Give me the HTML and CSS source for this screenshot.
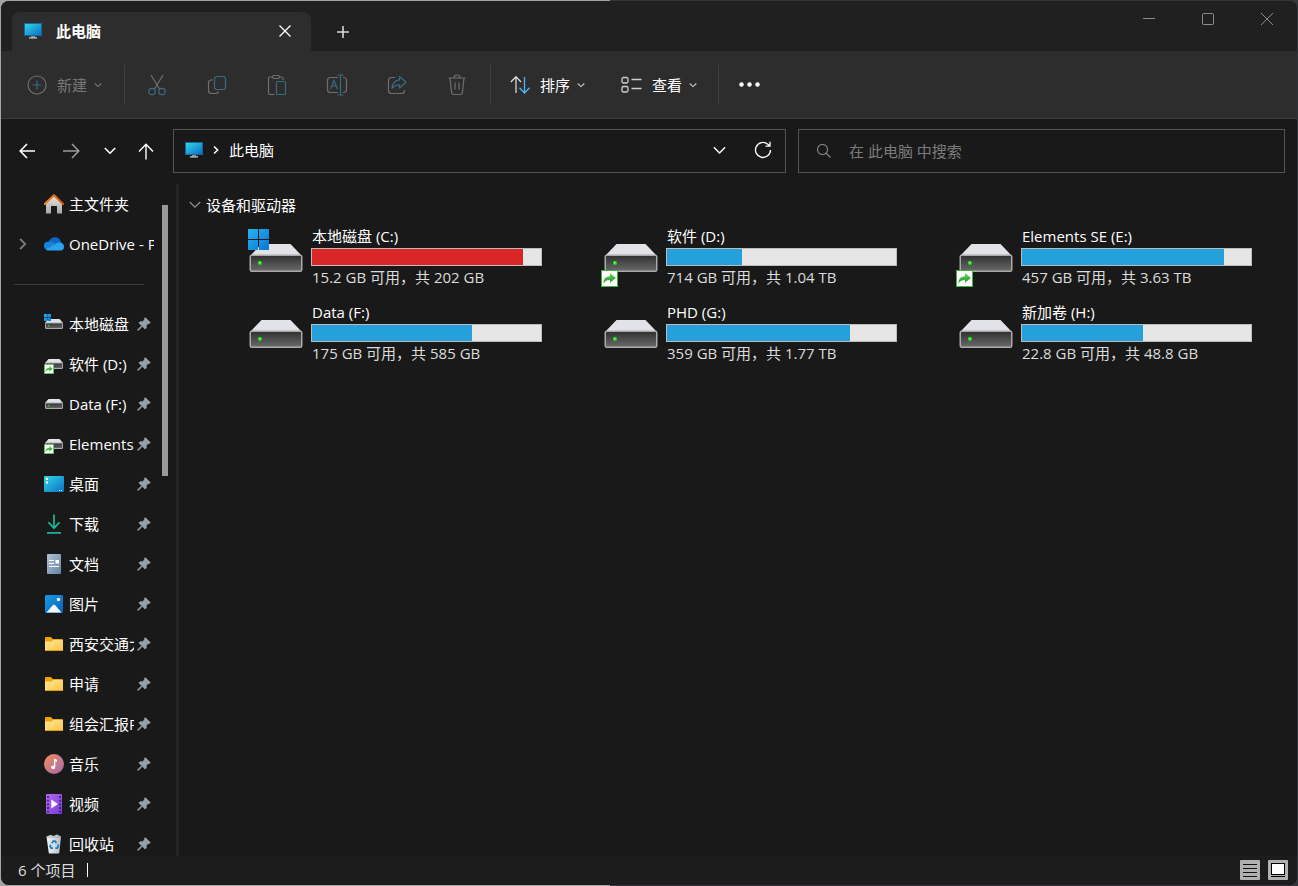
FILE: index.html
```html
<!DOCTYPE html>
<html lang="zh-CN">
<head>
<meta charset="utf-8">
<title>此电脑</title>
<link rel="stylesheet" href="styles.css">
</head>
<body>
<svg class="defs" width="0" height="0" aria-hidden="true">
  <defs>
    <linearGradient id="gScreen" x1="0" y1="0" x2="1" y2="1"><stop offset="0" stop-color="#33d6e6"/><stop offset="1" stop-color="#0b6fc6"/></linearGradient>
    <linearGradient id="gBody" x1="0" y1="0" x2="0" y2="1"><stop offset="0" stop-color="#303030"/><stop offset="1" stop-color="#6a6a6a"/></linearGradient>
    <linearGradient id="gWin" x1="0" y1="0" x2="1" y2="1"><stop offset="0" stop-color="#2bb0f0"/><stop offset="1" stop-color="#0878d4"/></linearGradient>
    <linearGradient id="gArrow" x1="0" y1="0" x2="0" y2="1"><stop offset="0" stop-color="#5cd04a"/><stop offset="1" stop-color="#2a9a35"/></linearGradient>
    <linearGradient id="gRoof" x1="0" y1="0" x2="1" y2="0"><stop offset="0" stop-color="#f58a1f"/><stop offset="1" stop-color="#d9500f"/></linearGradient>
    <linearGradient id="gHouse" x1="0" y1="0" x2="0" y2="1"><stop offset="0" stop-color="#e6e6e6"/><stop offset="1" stop-color="#a8a8a8"/></linearGradient>
    <linearGradient id="gDown" x1="0" y1="0" x2="0" y2="1"><stop offset="0" stop-color="#2fc48d"/><stop offset="1" stop-color="#12b5a0"/></linearGradient>
    <linearGradient id="gDoc" x1="0" y1="0" x2="1" y2="1"><stop offset="0" stop-color="#b4c3d6"/><stop offset="1" stop-color="#6484a4"/></linearGradient>
    <linearGradient id="gPic" x1="0" y1="0" x2="1" y2="1"><stop offset="0" stop-color="#1a9ae6"/><stop offset="1" stop-color="#0660bc"/></linearGradient>
    <linearGradient id="gFolder" x1="0" y1="0" x2="1" y2="1"><stop offset="0" stop-color="#ffe6a0"/><stop offset="1" stop-color="#ffc738"/></linearGradient>
    <linearGradient id="gMusic" x1="0" y1="0" x2="1" y2="1"><stop offset="0" stop-color="#f59058"/><stop offset="1" stop-color="#a565b0"/></linearGradient>
    <linearGradient id="gVideo" x1="0" y1="0" x2="1" y2="1"><stop offset="0" stop-color="#b06cf0"/><stop offset="1" stop-color="#7c38d8"/></linearGradient>
    <linearGradient id="gBin" x1="0" y1="0" x2="1" y2="0"><stop offset="0" stop-color="#f4f6f8"/><stop offset="1" stop-color="#b9bec4"/></linearGradient>
  </defs>
  <symbol id="pc" viewBox="0 0 18 16">
    <rect width="18" height="13" fill="#14699a"/><rect x="1" y="1" width="16" height="11" fill="url(#gScreen)"/>
    <path d="M7 13h4v1.500h-4z" fill="#7d8b96"/><path d="M5 14.300h8v1.200H5z" fill="#c9d3da"/>
  </symbol>
  <symbol id="winlogo" viewBox="0 0 21 21">
    <path d="M0 0h10v10H0zM11 0h10v10H11zM0 11h10v10H0zM11 11h10v10H11z" fill="url(#gWin)"/>
  </symbol>
  <symbol id="share" viewBox="0 0 17 17">
    <rect x=".5" y=".5" width="16" height="16" fill="#fff" stroke="#3cb43c"/>
    <path d="M2.500 13.500C2.300 9.500 4.500 6.500 9 6.300V3.300L15 8l-6 4.700V10C6 9.800 4 11 2.500 13.500z" fill="url(#gArrow)"/>
  </symbol>
  <symbol id="drive" viewBox="0 0 53 28">
    <path d="M12 0h29l11 11.500H1z" fill="#e2e3e8"/>
    <rect x=".75" y="11.250" width="51.500" height="16" rx="1.500" fill="url(#gBody)" stroke="#aaa" stroke-width="1.500"/>
    <circle cx="10.500" cy="19" r="2.200" fill="#1ec81e"/><circle cx="10.200" cy="18.700" r="1" fill="#7dff6a"/>
  </symbol>
  <symbol id="driveS" viewBox="0 0 18 10">
    <path d="M3.500 0h11L18 4H0z" fill="#e2e3e8"/>
    <rect x=".5" y="4" width="17" height="5.500" rx=".5" fill="url(#gBody)" stroke="#aaa"/>
    <rect x="3" y="6" width="1.300" height="1.300" fill="#2bea2b"/>
  </symbol>
  <symbol id="pin" viewBox="0 0 14 14">
    <path d="M8.300.6l5 5-1.200 1.100-.9-.1-2 2 .1 2.300-1.200 1.200-2.800-2.800-3.700 3.900-.9.200.2-.9 3.800-3.800L1.800 5.900 3 4.700l2.500.1 2-2-.3-1.100z" fill="#95a1aa" stroke="#95a1aa" stroke-width=".7"/>
  </symbol>
  <symbol id="chev" viewBox="0 0 8 8"><path d="M.7 2.500L4 5.600l3.300-3.100" fill="none" stroke="currentColor" stroke-width="1.100"/></symbol>
  <symbol id="chevL" viewBox="0 0 12 12"><path d="M.8 3L6 8.200 11.200 3" fill="none" stroke="currentColor" stroke-width="1.300"/></symbol>
  <symbol id="folder" viewBox="0 0 18 14">
    <path d="M0 1.200Q0 0 1.200 0h4.600l2 2H17q1 0 1 1v2H0z" fill="#f0a30a"/>
    <path d="M0 4.500h6.500L8.200 3H17q1 0 1 1v9q0 1-1 1H1q-1 0-1-1z" fill="url(#gFolder)"/><path d="M.5 13.500h17" stroke="#e0a21a"/>
  </symbol>
</svg>

<div class="window">
  <header class="titlebar">
    <div class="tab">
      <svg class="pc"><use href="#pc"/></svg>
      <span class="tab-title">此电脑</span>
      <button class="tab-close" aria-label="关闭标签页"><svg width="12" height="12" viewBox="0 0 12 12"><path d="M.5.5l11 11M11.500.5l-11 11" stroke="currentColor" stroke-width="1.300"/></svg></button>
    </div>
    <button class="tab-new" aria-label="新标签页"><svg width="12" height="12" viewBox="0 0 12 12"><path d="M6 0v12M0 6h12" stroke="#d8d8d8" stroke-width="1.600"/></svg></button>
    <div class="caption">
      <button aria-label="最小化"><svg width="12" height="12"><path d="M0 5.500h12" stroke="currentColor"/></svg></button>
      <button aria-label="最大化"><svg width="12" height="12"><rect x=".5" y=".5" width="11" height="11" rx="1" fill="none" stroke="currentColor"/></svg></button>
      <button aria-label="关闭"><svg width="12" height="12"><path d="M0 0l12 12M12 0L0 12" stroke="currentColor"/></svg></button>
    </div>
  </header>

  <div class="toolbar">
    <button class="cmd dim" disabled>
      <svg width="20" height="20" viewBox="0 0 20 20" fill="none"><circle cx="10" cy="10" r="9" stroke="#6f6f6f" stroke-width="1.200"/><path d="M10 5.500v9M5.500 10h9" stroke="#3a6b85" stroke-width="1.200"/></svg>
      <span>新建</span><svg class="chev"><use href="#chev"/></svg>
    </button>
    <i class="sep sep-a"></i>
    <div class="icons">
      <button disabled aria-label="剪切"><svg width="20" height="22" viewBox="0 0 20 22" fill="none" stroke-width="1.200"><path d="M4 1l8.500 14M16 1L7.500 15" stroke="#6f6f6f"/><circle cx="5" cy="17.500" r="3.200" stroke="#3a6b85"/><circle cx="15" cy="17.500" r="3.200" stroke="#3a6b85"/></svg></button>
      <button disabled aria-label="复制"><svg width="20" height="20" viewBox="0 0 20 20" fill="none" stroke-width="1.200"><path d="M6 5H4.500Q1.500 5 1.500 8v7.500q0 3 3 3H8q3 0 3.500-2" stroke="#6f6f6f"/><rect x="7.500" y="1.500" width="11" height="13" rx="2.500" stroke="#3a6b85"/></svg></button>
      <button disabled aria-label="粘贴"><svg width="20" height="22" viewBox="0 0 20 22" fill="none" stroke-width="1.200"><path d="M6 3H3Q1.500 3 1.500 4.500v14.500q0 1.500 1.500 1.500h4.500M12 3h2.500Q16 3 16 4.500V6" stroke="#6f6f6f"/><rect x="5.500" y="1.500" width="7" height="3" rx="1.500" stroke="#6f6f6f"/><rect x="9.500" y="7.500" width="9" height="13" rx="1" stroke="#3a6b85"/></svg></button>
      <button disabled aria-label="重命名"><svg width="22" height="22" viewBox="0 0 22 22" fill="none" stroke-width="1.200"><path d="M12 3.500H4.500Q1.500 3.500 1.500 6.500v9q0 3 3 3H12M17 3.500q3.500 0 3.500 3v9q0 3-3.500 3" stroke="#6f6f6f"/><path d="M4.500 15L8 6.500l3.500 8.500M5.700 12h4.600M14.500 1.200v19.600M11.500 1h6M11.500 21h6" stroke="#3a6b85"/></svg></button>
      <button disabled aria-label="共享"><svg width="20" height="20" viewBox="0 0 20 20" fill="none" stroke-width="1.200"><path d="M8 2.500H4.500q-3 0-3 3v10q0 3 3 3h10q3 0 3-3V15" stroke="#6f6f6f"/><path d="M12.500 1.500l6.500 5.800-6.500 5.700V9.800Q8 9.500 5 13.500 5.500 5.500 12.500 4.800z" stroke="#3a6b85" stroke-linejoin="round"/></svg></button>
      <button disabled aria-label="删除"><svg width="20" height="22" viewBox="0 0 20 22" fill="none" stroke="#6f6f6f" stroke-width="1.200"><path d="M1.500 4h17M3 4l1.600 14.500q.2 2 2.200 2h6.400q2 0 2.200-2L17 4M7 4q0-3 3-3t3 3M8 8.500v7M12 8.500v7"/></svg></button>
    </div>
    <i class="sep sep-b"></i>
    <button class="cmd sort">
      <svg width="20" height="20" viewBox="0 0 20 20" fill="none" stroke-width="1.300"><path d="M6 18V2M.8 7L6 1.800 11 7" stroke="#d8d8d8"/><path d="M14.500 2v16M9.500 12.800l5 5.200 5-5.200" stroke="#4cb8f5"/></svg>
      <span>排序</span><svg class="chev"><use href="#chev"/></svg>
    </button>
    <button class="cmd view">
      <svg width="21" height="20" viewBox="0 0 21 20" fill="none" stroke="#d0d0d0" stroke-width="1.300"><rect x="1" y="2.500" width="6" height="5.500" rx="1.500"/><rect x="1" y="11.500" width="6" height="5.500" rx="1.500"/><path d="M10.500 4.500H20.500M10.500 13.500H20.500"/></svg>
      <span>查看</span><svg class="chev"><use href="#chev"/></svg>
    </button>
    <i class="sep sep-c"></i>
    <button class="more" aria-label="更多"><svg width="21" height="5" viewBox="0 0 21 5" fill="#fff"><circle cx="2.500" cy="2.500" r="2.200"/><circle cx="10.500" cy="2.500" r="2.200"/><circle cx="18.500" cy="2.500" r="2.200"/></svg></button>
  </div>

  <div class="navrow">
    <nav class="nav">
      <button aria-label="后退"><svg width="17" height="16" viewBox="0 0 17 16"><path d="M16 8H1.500M8 1L1.200 8 8 15" fill="none" stroke="#fff" stroke-width="1.600"/></svg></button>
      <button aria-label="前进"><svg width="17" height="16" viewBox="0 0 17 16"><path d="M0 8h15.500M9 1l6.800 7L9 15" fill="none" stroke="#999" stroke-width="1.600"/></svg></button>
      <button class="recent" aria-label="最近位置"><svg width="12" height="12" viewBox="0 0 12 12"><path d="M.8 3L6 8.200 11.200 3" fill="none" stroke="#fff" stroke-width="1.600"/></svg></button>
      <button class="up" aria-label="向上"><svg width="16" height="17" viewBox="0 0 16 17"><path d="M8 16.500V1.500M1 8.500L8 1.300l7 7.200" fill="none" stroke="#fff" stroke-width="1.400"/></svg></button>
    </nav>
    <div class="fields">
      <div class="address">
        <svg class="pc"><use href="#pc"/></svg>
        <svg class="crumb" width="6" height="10" viewBox="0 0 6 10"><path d="M1 1.500L4.700 5 1 8.500" fill="none" stroke="#fff" stroke-width="1.500"/></svg>
        <span class="path">此电脑</span>
        <button aria-label="以前的位置"><svg width="13" height="13"><use href="#chevL"/></svg></button>
        <button aria-label="刷新"><svg width="18" height="18" viewBox="0 0 18 18" fill="none" stroke="#fff" stroke-width="1.300"><path d="M16.500 9A7.500 7.500 0 1 1 13.800 3.200L16 5M16 .8V5.200H11.500"/></svg></button>
      </div>
      <label class="search">
        <svg width="14" height="14" viewBox="0 0 14 14" fill="none" stroke="#888" stroke-width="1.100"><circle cx="5.500" cy="5.500" r="5"/><path d="M9 9l4.500 4.500"/></svg>
        <input type="text" placeholder="在 此电脑 中搜索" aria-label="搜索">
      </label>
    </div>
  </div>

  <div class="body">
    <aside class="side">
      <ul class="tree">
        <li><svg class="ico" viewBox="0 0 20 20"><path d="M2 9L10 1.500 18 9v10.500h-5V12.500q0-.5-.5-.5h-5q-.5 0-.5.500v7H2z" fill="url(#gHouse)"/><path d="M.8 10L10 1.300l9.200 8.700" fill="none" stroke="url(#gRoof)" stroke-width="2.200" stroke-linejoin="round" stroke-linecap="round"/></svg><span class="long">主文件夹</span></li>
        <li><svg class="exp" viewBox="0 0 8 12"><path d="M1.200 1l5 5-5 5" fill="none" stroke="#7a7a7a" stroke-width="1.800"/></svg><svg class="ico" viewBox="0 0 20 20"><path d="M4.500 8Q6.500 3.300 11 3.300q4.800 0 6 5.200l-3 6H3Q0 14 0 11t4.500-3z" fill="#1068c4"/><path d="M4.500 7.500Q9 7 12 10l-8 6Q0 15.500 0 11.500q0-3.500 4.500-4z" fill="#1484dc"/><path d="M11 10.500Q13 8 16 8.500q4 .8 4 4 0 4-3.500 4H4.500Q2.800 16.500 2 15.300z" fill="#2ba4f0"/></svg><span class="long">OneDrive - Personal</span></li>
        <li class="rule"></li>
        <li><svg class="ico" viewBox="0 0 20 20"><use href="#driveS" x="1" y="5" width="18" height="10"/><use href="#winlogo" x="0" y="0" width="7" height="7"/></svg><span>本地磁盘</span><svg class="pin"><use href="#pin"/></svg></li>
        <li><svg class="ico" viewBox="0 0 20 20"><use href="#driveS" x="1" y="5" width="18" height="10"/><use href="#share" x="0" y="10" width="10" height="10"/></svg><span>软件 (D:)</span><svg class="pin"><use href="#pin"/></svg></li>
        <li><svg class="ico" viewBox="0 0 20 20"><use href="#driveS" x="1" y="5" width="18" height="10"/></svg><span>Data (F:)</span><svg class="pin"><use href="#pin"/></svg></li>
        <li><svg class="ico" viewBox="0 0 20 20"><use href="#driveS" x="1" y="5" width="18" height="10"/><use href="#share" x="0" y="10" width="10" height="10"/></svg><span>Elements</span><svg class="pin"><use href="#pin"/></svg></li>
        <li><svg class="ico" viewBox="0 0 20 20"><rect y="2" width="20" height="16" rx="1" fill="url(#gScreen)"/><path d="M2 4h2v2H2zM2 7.500h2v2H2z" fill="#fff"/><path d="M15 16.500h1M17 16.500h1" stroke="#fff"/></svg><span>桌面</span><svg class="pin"><use href="#pin"/></svg></li>
        <li><svg class="ico" viewBox="0 0 20 20"><path d="M9.200 0.500h1.600V12l4.300-4.300 1.100 1.100L10 15.500 3.800 8.800l1.100-1.100L9.200 12zM3 18h14v1.700H3z" fill="url(#gDown)"/></svg><span>下载</span><svg class="pin"><use href="#pin"/></svg></li>
        <li><svg class="ico" viewBox="0 0 20 20"><rect x="3" width="14" height="20" rx="1" fill="url(#gDoc)"/><path d="M5 6.500h5M5 9.500h5M5 12.500h10" stroke="#fff" stroke-width="1.200"/><rect x="11.500" y="6" width="3.500" height="3.500" fill="#fff"/></svg><span>文档</span><svg class="pin"><use href="#pin"/></svg></li>
        <li><svg class="ico" viewBox="0 0 20 20"><rect x="1" y="1" width="18" height="18" rx="1.500" fill="url(#gPic)"/><path d="M2.500 18.500L9 11q1-1 2 0l6.500 7.500z" fill="#f2f8ff"/><circle cx="14.500" cy="5.500" r="1.700" fill="#fff"/></svg><span>图片</span><svg class="pin"><use href="#pin"/></svg></li>
        <li><svg class="ico" viewBox="0 0 20 20"><use href="#folder" x="1" y="3" width="18" height="14"/></svg><span>西安交通大学</span><svg class="pin"><use href="#pin"/></svg></li>
        <li><svg class="ico" viewBox="0 0 20 20"><use href="#folder" x="1" y="3" width="18" height="14"/></svg><span>申请</span><svg class="pin"><use href="#pin"/></svg></li>
        <li><svg class="ico" viewBox="0 0 20 20"><use href="#folder" x="1" y="3" width="18" height="14"/></svg><span>组会汇报PPT</span><svg class="pin"><use href="#pin"/></svg></li>
        <li><svg class="ico" viewBox="0 0 20 20"><circle cx="10" cy="10" r="10" fill="url(#gMusic)"/><path d="M10 4.500l3 1.300v2l-1.700-.6V13q0 2.200-2.200 2.200T7 13.200q0-2 3-1.800z" fill="#fff"/></svg><span>音乐</span><svg class="pin"><use href="#pin"/></svg></li>
        <li><svg class="ico" viewBox="0 0 20 20"><rect x="2" width="16" height="20" rx="1" fill="url(#gVideo)"/><path d="M4 2v17M16 2v17" stroke="#3c1a78" stroke-width="1.800" stroke-dasharray="1.800 1.900"/><path d="M7.300 5.500l6.500 4.500-6.500 4.500z" fill="#fff"/></svg><span>视频</span><svg class="pin"><use href="#pin"/></svg></li>
        <li><svg class="ico" viewBox="0 0 20 20"><path d="M2.500 2.500l4-1.500 3 1 3.500-1.500 4 2-1.700 16q-.1 1-1 1H5.700q-.9 0-1-1z" fill="url(#gBin)"/><path d="M2.500 3h14.800" stroke="#8d969e" stroke-width=".7"/><path d="M7.800 9.300l1.500-2.200h1.800l1.300 2M13.700 10.500l.7 1.700-1.200 2h-1.800M9 14.200H7.200L6 12.300l.8-1.600" fill="none" stroke="#0f7fd6" stroke-width="1.700"/></svg><span>回收站</span><svg class="pin"><use href="#pin"/></svg></li>
      </ul>
      <div class="scroll"></div>
    </aside>

    <main class="main">
      <h2 class="group"><svg width="12" height="12"><use href="#chevL"/></svg>设备和驱动器</h2>
      <div class="drives">
        <section class="drive">
          <svg class="art" viewBox="0 0 55 61"><use href="#drive" x="1" y="17" width="54" height="28"/><use href="#winlogo" y="2" width="21" height="21"/></svg>
          <div class="info"><div class="name">本地磁盘 (C:)</div><div class="bar"><div class="fill full" style="width:92.1%"></div></div><div class="free">15.2 GB 可用，共 202 GB</div></div>
        </section>
        <section class="drive">
          <svg class="art" viewBox="0 0 55 61"><use href="#drive" x="1" y="17" width="54" height="28"/><use href="#share" x="-2" y="43" width="17" height="17"/></svg>
          <div class="info"><div class="name">软件 (D:)</div><div class="bar"><div class="fill" style="width:32.8%"></div></div><div class="free">714 GB 可用，共 1.04 TB</div></div>
        </section>
        <section class="drive">
          <svg class="art" viewBox="0 0 55 61"><use href="#drive" x="1" y="17" width="54" height="28"/><use href="#share" x="-2" y="43" width="17" height="17"/></svg>
          <div class="info"><div class="name">Elements SE (E:)</div><div class="bar"><div class="fill" style="width:88.2%"></div></div><div class="free">457 GB 可用，共 3.63 TB</div></div>
        </section>
        <section class="drive">
          <svg class="art" viewBox="0 0 55 61"><use href="#drive" x="1" y="17" width="54" height="28"/></svg>
          <div class="info"><div class="name">Data (F:)</div><div class="bar"><div class="fill" style="width:69.9%"></div></div><div class="free">175 GB 可用，共 585 GB</div></div>
        </section>
        <section class="drive">
          <svg class="art" viewBox="0 0 55 61"><use href="#drive" x="1" y="17" width="54" height="28"/></svg>
          <div class="info"><div class="name">PHD (G:)</div><div class="bar"><div class="fill" style="width:79.9%"></div></div><div class="free">359 GB 可用，共 1.77 TB</div></div>
        </section>
        <section class="drive">
          <svg class="art" viewBox="0 0 55 61"><use href="#drive" x="1" y="17" width="54" height="28"/></svg>
          <div class="info"><div class="name">新加卷 (H:)</div><div class="bar"><div class="fill" style="width:52.8%"></div></div><div class="free">22.8 GB 可用，共 48.8 GB</div></div>
        </section>
      </div>
    </main>
  </div>

  <footer class="status">
    <span>6 个项目</span><i class="tick"></i>
    <button aria-label="详细信息"><svg width="20" height="20"><rect width="20" height="20" rx="1" fill="#b0b0b0"/><path d="M3 4.500h14M3 8.500h14M3 12.500h14M3 16.500h14" stroke="#111"/></svg></button>
    <button aria-label="大图标"><svg width="20" height="20"><rect width="20" height="20" rx="1" fill="#b0b0b0"/><rect x="3.500" y="3.500" width="13" height="11" fill="#fff" stroke="#000"/><path d="M3 16.500h14" stroke="#000"/></svg></button>
  </footer>
</div>
</body>
</html>
```
FILE: styles.css
```css
* { box-sizing: border-box; }

body {
  margin: 0;
  height: 100vh;
  padding: 1px;
  background: linear-gradient(to right, #a4a4a4 47%, #34343b 47%);
  font: 15px/20px "Open Sans", "Noto Sans CJK SC", sans-serif;
  color: #fff;
}

.defs { position: absolute; }
svg { flex: none; display: block; }

button {
  display: flex;
  align-items: center;
  justify-content: center;
  padding: 0;
  border: 0;
  background: none;
  color: inherit;
  font: inherit;
}

.window {
  display: flex;
  flex-direction: column;
  height: 100%;
  border-radius: 8px;
  overflow: hidden;
  background: #191919;
}

.pc { width: 18px; height: 16px; }

/* Title bar */
.titlebar {
  display: flex;
  height: 50px;
  background: #202020;
}
.tab {
  display: flex;
  align-items: center;
  width: 299px;
  margin: 11px 0 0 11px;
  padding: 0 10px 2px 12px;
  border-radius: 8px 8px 0 0;
  background: #2d2d2d;
}
.tab-title { flex: 1; margin-left: 14px; font-weight: 700; }
.tab-close { width: 32px; height: 32px; }
.tab-new { width: 32px; margin: 12px 0 0 16px; }
.caption { display: flex; margin-left: auto; padding-right: 1px; height: 36px; color: #8c8c8c; }
.caption button { width: 59px; }

/* Command bar */
.toolbar {
  display: flex;
  align-items: center;
  height: 68px;
  padding-left: 26px;
  border-bottom: 1px solid #3c3c3c;
  background: #2d2d2d;
}
.cmd { height: 40px; }
.cmd span { margin: 0 7px 0 10px; }
.cmd .chev { width: 8px; height: 8px; color: #c8c8c8; }
.dim, .dim .chev { color: #777; }
.sep { width: 1px; height: 40px; background: #3f3f3f; }
.sep-a { margin: 0 2px 0 22px; }
.sep-b { margin: 0 19px 0 3px; }
.sep-c { margin: 0 20px 0 21px; }
.icons { display: flex; }
.icons button { width: 60px; height: 40px; }
.view { margin-left: 36px; }
.more { height: 40px; }

/* Address row */
.navrow { display: flex; padding: 10px 12px 11px 0; }
.nav { display: flex; width: 172px; padding-left: 4px; }
.nav button { width: 44px; }
.nav .recent { width: 33px; }
.nav .up { width: 40px; }
.fields {
  flex: 1;
  display: grid;
  grid-template-columns: 613fr 487fr;
  gap: 12px;
}
.address, .search {
  display: flex;
  align-items: center;
  height: 44px;
  border: 1px solid #545454;
}
.address { padding: 0 1px 2px 11px; }
.crumb { margin: 0 10px; }
.path { flex: 1; }
.address button { width: 43px; height: 42px; }
.search { padding: 0 12px 0 18px; }
.search input {
  flex: 1;
  min-width: 0;
  margin-left: 18px;
  padding: 0;
  border: 0;
  outline: 0;
  background: none;
  color: #fff;
  font: inherit;
}
.search input::placeholder { color: #7c7c7c; opacity: 1; }

/* Navigation pane */
.body { flex: 1; display: flex; min-height: 0; }
.side {
  display: flex;
  justify-content: space-between;
  width: 178px;
  padding-right: 8px;
  border-right: 3px solid #252525;
  overflow: hidden;
}
.tree { width: 153px; margin: 0; padding: 0; list-style: none; }
.tree li {
  display: flex;
  align-items: center;
  height: 40px;
  padding-left: 43px;
}
.tree .exp { width: 8px; height: 12px; margin: 0 17px 0 -25px; }
.tree .ico { width: 20px; height: 20px; margin-right: 5px; }
.tree span { width: 65px; overflow: hidden; white-space: nowrap; }
.tree .long { width: 85px; }
.tree .pin { width: 14px; height: 14px; margin-left: 3px; }
.tree .rule::before { content: ""; width: 130px; height: 1px; margin-left: -30px; background: #3c3c3c; }
.scroll { width: 6px; height: 271px; margin-top: 21px; background: #999; }

/* Drives */
.main { flex: 1; padding: 11px 8px 0 10px; }
.group {
  display: flex;
  align-items: center;
  gap: 5px;
  margin: 0;
  font-size: 15px;
  font-weight: 400;
}
.group svg { color: #8f8f8f; }
.drives {
  display: grid;
  grid-template-columns: repeat(auto-fill, 294px);
  gap: 15px 61px;
  margin: 12px 0 0 59px;
}
.drive { display: flex; gap: 8px; }
.art { width: 55px; height: 61px; overflow: visible; }
.info { flex: 1; }
.name, .free { padding-left: 1px; line-height: 18px; white-space: nowrap; }
.free { color: #dcdcdc; }
.bar {
  height: 18px;
  margin: 3px 0 2px;
  border: 1px solid #bcbcbc;
  background: #e6e6e6;
}
.fill { height: 100%; background: #26a0da; }
.fill.full { background: #da2626; }

/* Status bar */
.status {
  display: flex;
  align-items: center;
  height: 29px;
  padding: 0 9px 2px 17px;
  background: #1c1c1c;
  color: #dcdcdc;
}
.tick { width: 1px; height: 14px; margin: 0 auto 0 12px; background: #fff; }
.status button + button { margin-left: 8px; }
```
